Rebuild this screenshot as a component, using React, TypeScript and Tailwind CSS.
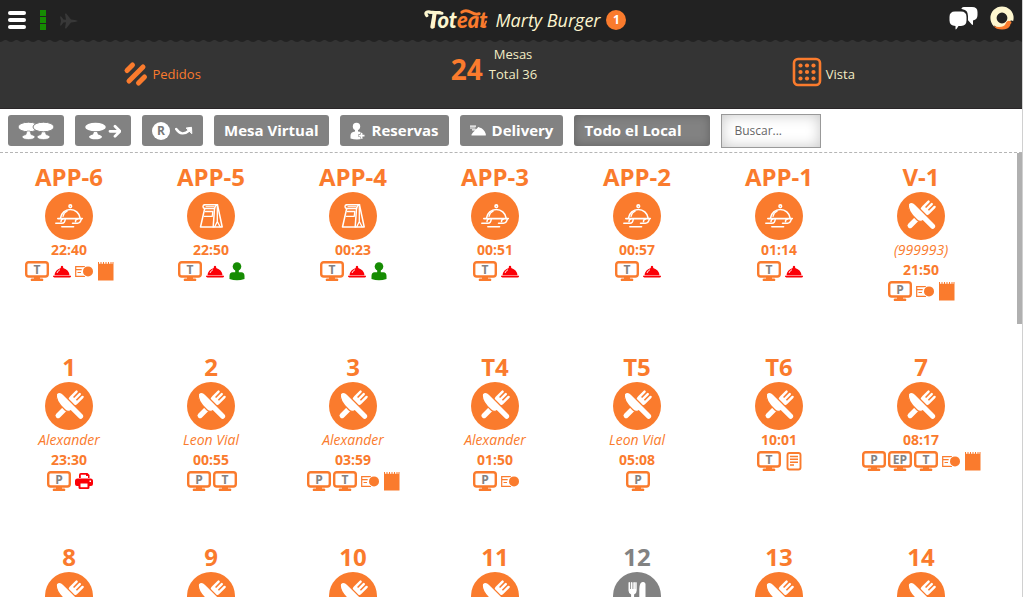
import React, { useState } from 'react';

type Monitor = 'T' | 'P' | 'EP';
type Small = 'bell' | 'card' | 'note' | 'person' | 'printer' | 'bill';
type Kind = 'delivery' | 'bag' | 'table' | 'free';

interface Mesa {
    name: string;
    kind: Kind;
    client?: string;
    time?: string;
    monitors?: Monitor[];
    icons?: Small[];
}

const mesas: Mesa[] = [
    { name: 'APP-6', kind: 'delivery', time: '22:40', monitors: ['T'], icons: ['bell', 'card', 'note'] },
    { name: 'APP-5', kind: 'bag', time: '22:50', monitors: ['T'], icons: ['bell', 'person'] },
    { name: 'APP-4', kind: 'bag', time: '00:23', monitors: ['T'], icons: ['bell', 'person'] },
    { name: 'APP-3', kind: 'delivery', time: '00:51', monitors: ['T'], icons: ['bell'] },
    { name: 'APP-2', kind: 'delivery', time: '00:57', monitors: ['T'], icons: ['bell'] },
    { name: 'APP-1', kind: 'delivery', time: '01:14', monitors: ['T'], icons: ['bell'] },
    { name: 'V-1', kind: 'table', client: '(999993)', time: '21:50', monitors: ['P'], icons: ['card', 'note'] },
    { name: '1', kind: 'table', client: 'Alexander', time: '23:30', monitors: ['P'], icons: ['printer'] },
    { name: '2', kind: 'table', client: 'Leon Vial', time: '00:55', monitors: ['P', 'T'] },
    { name: '3', kind: 'table', client: 'Alexander', time: '03:59', monitors: ['P', 'T'], icons: ['card', 'note'] },
    { name: 'T4', kind: 'table', client: 'Alexander', time: '01:50', monitors: ['P'], icons: ['card'] },
    { name: 'T5', kind: 'table', client: 'Leon Vial', time: '05:08', monitors: ['P'] },
    { name: 'T6', kind: 'table', time: '10:01', monitors: ['T'], icons: ['bill'] },
    { name: '7', kind: 'table', time: '08:17', monitors: ['P', 'EP', 'T'], icons: ['card', 'note'] },
    { name: '8', kind: 'table' },
    { name: '9', kind: 'table' },
    { name: '10', kind: 'table' },
    { name: '11', kind: 'table' },
    { name: '12', kind: 'free' },
    { name: '13', kind: 'table' },
    { name: '14', kind: 'table' },
];

const KindIcon: React.FC<{ kind: Kind }> = ({ kind }) => {
    if (kind === 'delivery') {
        return (
            <svg viewBox="0 0 48 48" className="size-12" fill="none" stroke="#fff" strokeWidth="1.600" strokeLinecap="round" aria-hidden="true">
                <circle cx="25.300" cy="14.200" r="1.300" />
                <path d="M15.500 26a9.900 9.900 0 0 1 19.600 0M12.800 26.600h24.500" />
                <path d="M18 24.300c.5-2.600 2-4.300 4.300-5.300" strokeWidth="1.300" />
                <path d="M10.800 31.200h6.200c2 0 3-1.500 3.200-4M16 29.500c0-1.300.6-2.300 1.800-2.500M27.500 31.200h5c2 0 3.300-1.500 3.800-4M30.500 29.500c0-1.300.8-2.300 2-2.500M16.800 34.700h11.800" strokeWidth="1.500" />
            </svg>
        );
    }
    if (kind === 'bag') {
        return (
            <svg viewBox="0 0 48 48" className="size-12" fill="none" stroke="#fff" strokeWidth="1.500" strokeLinejoin="round" strokeLinecap="round" aria-hidden="true">
                <path d="M17.500 12.800h13l4.700 22.200H13.500l4.200-18.500h9.800" />
                <path d="M17.500 12.800c-2 .4-2 3.300.2 3.700M30.500 12.800c-2 .6-2.700 2-3 3.700l-1.300 18.500" />
                <path d="M18.300 19.500h7.500l-.6 4.800h-8M30.300 14.500v15l-2.500 5.300M30.300 29.500l2.800 5.300" strokeWidth="1.300" />
                <path d="M19 14.700h8" strokeWidth="1" />
            </svg>
        );
    }
    if (kind === 'free') {
        return (
            <svg viewBox="0 0 48 48" className="size-12" fill="#fff" aria-hidden="true">
                <path d="M15.500 10.500q.8-1 1.600 0V17h.8V10.500q.8-1 1.600 0V17h.8V10.500q.8-1 1.600 0V17h.3V10.500q.8-1 1.500 0V18.500q0 3-2.600 4v13.500q-1.500 3-3 0V22.500q-2.600-1-2.600-4z" />
                <path d="M32.500 12v24.500q-1.800 2.500-3.500 0V27h-2.700V17q.3-8 4.200-7 2 .4 2 2z" />
            </svg>
        );
    }
    return (
        <svg viewBox="0 0 48 48" className="size-12" aria-hidden="true">
            <path
                transform="rotate(45 24 24)"
                fill="#fff"
                d="M18 8.500a1.200 1.200 0 0 1 2.400 0v6.200h1.600V8a1.200 1.200 0 0 1 2.400 0v6.700H26V8a1.200 1.200 0 0 1 2.400 0v.5V16c0 2.800-1.200 4.300-2.700 5.200V38.500a2.600 2.600 0 0 1-5.200 0V21.200c-1.500-.9-2.500-2.400-2.500-5.200z"
            />
            <path
                transform="rotate(-45 24 24)"
                fill="#fff"
                stroke="#fa7b2d"
                strokeWidth="1.200"
                d="M23.800 6.500c3 .2 4.400 2.200 4.400 5.500v27.500a3.200 3.200 0 0 1-6.400 0V28.500c-2.300-.6-3.300-2-3.400-4.500-.3-7.500.6-14.500 5.400-17.500z"
            />
        </svg>
    );
};

const SmallIcon: React.FC<{ name: Small }> = ({ name }) => {
    switch (name) {
        case 'bell':
            return (
                <svg viewBox="0 0 20 20" className="size-5" aria-hidden="true">
                    <path fill="#fb0007" d="M1 14.800h18v.7q-.3 1-1.300 1H2.300q-1-.3-1.300-1zM2.500 14.200q.4-5.300 6.300-7.300V6.300Q8.600 4.700 10 4.700t1.200 1.600v.6q5.900 2 6.300 7.300z" />
                    <path d="M5 12q.8-2.300 3-3.300" fill="none" stroke="#fff" strokeWidth=".9" />
                </svg>
            );
        case 'card':
            return (
                <svg viewBox="0 0 20 20" className="size-5" aria-hidden="true">
                    <path d="M11 5.600H1.700v9.800H11M1.700 8.700h6M3.500 11.500h3.500" fill="none" stroke="#fa7b2d" strokeWidth="1.200" />
                    <circle cx="14" cy="10.400" r="5.800" fill="#fff" />
                    <circle cx="14" cy="10.400" r="5" fill="#fa7b2d" />
                </svg>
            );
        case 'note':
            return (
                <svg viewBox="0 0 20 20" className="size-5" fill="#fa7b2d" aria-hidden="true">
                    <path d="M2 1h1v1.800h1.500V1h1v1.800H7V1h1v1.800h1.500V1h1v1.800H12V1h1v1.800h1.500V1h1v1.800H16.500V1H17.500V19.500H2z" />
                </svg>
            );
        case 'person':
            return (
                <svg viewBox="0 0 20 20" className="size-5" fill="#168c03" aria-hidden="true">
                    <circle cx="10" cy="5.500" r="4.300" />
                    <path d="M8.200 9h3.600v2.200h2.500q3.200 0 3.200 3.800v3q-7.500 2.500-15 0v-3q0-3.800 3.200-3.800h2.500z" />
                </svg>
            );
        case 'printer':
            return (
                <svg viewBox="0 0 20 20" className="size-5" aria-hidden="true">
                    <path fill="#fb0007" fillRule="evenodd" d="M5 7V4q0-2 2-2h6.500L15.500 4v3h-1.500V5H12V3.800H6.800V7zM3.500 7.500h13Q19 7.500 19 10v3q0 2-2 2h-1.500v1.500q0 1.500-1.500 1.500H6Q4.500 18 4.500 16.500V15H3Q1 15 1 13v-3Q1 7.500 3.500 7.500zM6.500 12.500v3.800h7v-3.800zM15.500 9.500V11H17V9.500z" />
                </svg>
            );
        default:
            return (
                <svg viewBox="0 0 20 20" className="size-5" fill="none" stroke="#fa7b2d" aria-hidden="true">
                    <rect x="3.500" y="2" width="13" height="16.500" rx="2" strokeWidth="1.900" />
                    <path d="M6 5.500h8M6 8.300h8M6 11.200h8M6 14h4" strokeWidth="1.500" />
                </svg>
            );
    }
};

const MonitorIcon: React.FC<{ label: Monitor }> = ({ label }) => (
    <span className="relative flex w-[26px] justify-center">
        <svg viewBox="0 0 24 22" className="h-[22px] w-6" aria-hidden="true">
            <rect x="1.200" y="2.200" width="21.600" height="14.300" rx="2.500" fill="none" stroke="#fa7b2d" strokeWidth="2.400" />
            <path d="M9 16.500h6v2h2.500q1.500.8.5 2.500H6q-1-1.700.5-2.500H9z" fill="#fa7b2d" />
        </svg>
        <span className="absolute inset-0 text-center text-xs leading-[19px] font-bold text-[#828282]">{label}</span>
    </span>
);

const MesaCard: React.FC<{ mesa: Mesa }> = ({ mesa }) => {
    const free = mesa.kind === 'free';
    return (
        <article className={`flex min-h-[182px] flex-col items-center ${free ? 'text-[#828282]' : 'text-[#fa7b2d]'}`}>
            <h2 className="text-2xl leading-[30px] font-bold">{mesa.name}</h2>
            <div className={`rounded-full ${free ? 'bg-[#828282]' : 'bg-[#fa7b2d]'}`}>
                <KindIcon kind={mesa.kind} />
            </div>
            {mesa.client && <p className="text-sm leading-5 italic">{mesa.client}</p>}
            {mesa.time && <p className="text-sm leading-5 font-bold">{mesa.time}</p>}
            <div className="flex pl-0.5">
                {mesa.monitors?.map((m) => <MonitorIcon key={m} label={m} />)}
                {mesa.icons?.map((i) => (
                    <span key={i} className="flex w-[22px] items-center justify-end">
                        <SmallIcon name={i} />
                    </span>
                ))}
            </div>
        </article>
    );
};

const Logo: React.FC = () => (
    <span className="relative flex pl-1 font-[Lato,sans-serif] text-[22px] leading-8 font-black text-[#fdf6cf]">
        <span className="italic">Tot</span>
        <span className="text-[#fa7b2d] italic">eat</span>
        <svg viewBox="0 0 66 32" className="absolute inset-0 h-full w-full" fill="none" strokeLinecap="round" aria-hidden="true">
            <path d="M3 11.500c-2.500-3 0-4.500 3.500-3.800l12 1.300" stroke="#fdf6cf" strokeWidth="3.200" />
            <path d="M11 9 8.500 23" stroke="#fdf6cf" strokeWidth="4" />
            <path d="M39 8c3-2.500 7-1.500 10 .3s5 2.500 8 1.200" stroke="#fa7b2d" strokeWidth="3" />
            <path d="M59 22.500c2.500.3 4-2 5-5" stroke="#fa7b2d" strokeWidth="2" />
        </svg>
    </span>
);

const barButton = 'flex h-[31px] items-center rounded-[3px] bg-[#828282] px-2.5 text-[15px] font-bold text-white';

export default function App() {
    const [search, setSearch] = useState('');

    return (
        <div className="flex h-screen flex-col overflow-hidden border-r border-[#d0d0d0] bg-white font-['Open_Sans','Noto_Sans',sans-serif]">
            <header className="flex h-10 shrink-0 items-center justify-between bg-[#222] px-2">
                <div className="flex flex-1 items-center">
                    <button type="button" aria-label="Menú" className="flex flex-col gap-[3px]">
                        <span className="h-1 w-[18px] rounded-full bg-white" />
                        <span className="h-1 w-[18px] rounded-full bg-white" />
                        <span className="h-1 w-[18px] rounded-full bg-white" />
                    </button>
                    <div className="ml-3.5 flex flex-col gap-px">
                        <span className="size-1.5 bg-[#168c03]" />
                        <span className="size-1.5 bg-[#168c03]" />
                        <span className="size-1.5 bg-[#168c03]" />
                    </div>
                    <svg viewBox="0 0 18 16" className="mt-0.5 ml-3.5 h-4 w-[18px]" fill="#383838" aria-hidden="true">
                        <path d="M0 3.500h1.200L3.500 6.500l2.500.3L5 1l1-.8 5 6.400 4 .4q2 .4 3 1-1 .6-3 1l-4 .4-5 6.400-1-.8 1-5.800-2.500.3-2.300 3H0L1 8z" />
                    </svg>
                </div>
                <div className="ml-7 flex items-center">
                    <Logo />
                    <h1 className="ml-2 text-lg text-[#fdf6cf] italic">Marty Burger</h1>
                    <span className="ml-1.5 flex size-5 items-center justify-center rounded-full bg-[#fa7b2d] text-xs font-bold text-white">1</span>
                </div>
                <div className="flex flex-1 items-center justify-end gap-3">
                    <button type="button" aria-label="Mensajes" className="-mt-1">
                        <svg viewBox="0 0 29 24" className="h-6 w-[29px]" fill="#fff" aria-hidden="true">
                            <path d="M15 1h8q5.500 0 5.500 5v3q0 4.500-4.500 5.500V18q0 1.500-1.200.5L19 14.300V10q0-6-5.500-6.800Q12 3 12.500 2.300 13.500 1 15 1z" />
                            <path d="M6 5.500h6q5.500 0 5.500 5.500v3.500q0 5-5.500 5.500h-2.500L7.500 23q-1 1-1-.3V20Q.5 19.500.5 14.500V11Q.5 5.500 6 5.500z" />
                        </svg>
                    </button>
                    <button type="button" aria-label="Cuenta" className="-mt-1">
                        <svg viewBox="0 0 24 24" className="size-6" fill="none" aria-hidden="true">
                            <circle cx="12" cy="12" r="8.500" stroke="#fdf6cf" strokeWidth="6.200" />
                            <path d="M4 19.500q4 3.500 9 2 5-1.500 6.300-5.500 1.700-2.500 4-.8V24H4z" fill="#222" />
                            <path d="M3.500 20q3.500 1.300 8 .8 3.500-.5 4.500-4 2-3.500 5-1.200.8 1 .3 1.600-1 .5-1.200 2.300Q18.500 23.500 12 23.500 6 23.500 3.500 20z" fill="#fa7b2d" />
                        </svg>
                    </button>
                </div>
            </header>

            <section className="shrink-0 bg-[#343434]">
                <svg className="block h-[3px] w-full" aria-hidden="true">
                    <defs>
                        <pattern id="scallop" width="11" height="3" patternUnits="userSpaceOnUse">
                            <path d="M0 0v2q2 0 3-1t2.500-1T8 1t3 1V0z" fill="#222" />
                        </pattern>
                    </defs>
                    <rect width="100%" height="3" fill="url(#scallop)" />
                </svg>
                <div className="grid h-[66px] grid-cols-3 border-b border-[#2a2628] pr-[34px] text-[13px] leading-5 text-[#f3edc4]">
                    <a href="#pedidos" className="flex items-center justify-center gap-1 pr-1.5 pb-1 text-[#fa7b2d]">
                        <svg viewBox="0 0 26 26" className="size-[26px]" stroke="#fa7b2d" strokeWidth="5" strokeLinecap="round" aria-hidden="true">
                            <path d="M4 9.500 9.500 4M6 20 20 6M15.500 22l6-6" />
                        </svg>
                        Pedidos
                    </a>
                    <div className="flex justify-center gap-1.5">
                        <strong className="pt-2 text-[28px] leading-9 text-[#fa7b2d]">24</strong>
                        <p className="pt-px text-center">
                            Mesas
                            <br />
                            Total 36
                        </p>
                    </div>
                    <a href="#vista" className="flex items-center justify-center gap-1 pb-1">
                        <svg viewBox="0 0 30 30" className="mb-1 size-[30px]" fill="#fa7b2d" aria-hidden="true">
                            <rect x="2" y="2" width="26" height="26" rx="4" fill="none" stroke="#fa7b2d" strokeWidth="2.600" />
                            {[8.5, 15, 21.5].map((y) => [8.5, 15, 21.5].map((x) => <circle key={`${x}-${y}`} cx={x} cy={y} r="2.100" />))}
                        </svg>
                        Vista
                    </a>
                </div>
            </section>

            <nav className="flex h-11 shrink-0 items-center gap-[11px] border-b border-dashed border-[#b5b5b5] px-2">
                <button type="button" aria-label="Unir mesas" className={barButton}>
                    <svg viewBox="0 0 36 20" className="h-5 w-9" fill="#fff" stroke="#828282" aria-hidden="true">
                        <ellipse cx="10.500" cy="6" rx="10.500" ry="4.800" />
                        <path d="M9 10h3l1 3.500q4 1 4 2.500-1 2.500-6.500 2.500T4 16q0-1.500 4-2.500zM24 10h3l1 3.500q4 1 4 2.500-1 2.500-6.500 2.500T19 16q0-1.500 4-2.500z" strokeWidth=".6" />
                        <ellipse cx="25.500" cy="6" rx="10.500" ry="4.800" />
                    </svg>
                </button>
                <button type="button" aria-label="Mover mesa" className={barButton}>
                    <svg viewBox="0 0 36 20" className="h-5 w-9" fill="#fff" aria-hidden="true">
                        <ellipse cx="10.500" cy="6" rx="10.300" ry="4.300" />
                        <path d="M9 11h3l1 2.500q4 1 4 2.500-1 2.300-6.500 2.300T4 16q0-1.500 4-2.500z" />
                        <path d="M25 10.300h9.500M30 5.300l5 5-5 5" fill="none" stroke="#fff" strokeWidth="2.800" strokeLinejoin="round" strokeLinecap="round" />
                    </svg>
                </button>
                <button type="button" aria-label="Reasignar" className={barButton}>
                    <span className="flex size-[18px] items-center justify-center rounded-full bg-white text-xs font-bold text-[#777]">R</span>
                    <svg viewBox="0 0 18 12" className="ml-[5px] h-3 w-[18px]" fill="none" stroke="#fff" strokeWidth="2.400" strokeLinecap="round" strokeLinejoin="round" aria-hidden="true">
                        <path d="M1.200 4q5.500 8 13 1.500" />
                        <path d="M11.500 3l5-.7.3 6z" fill="#fff" strokeWidth="1" />
                    </svg>
                </button>
                <button type="button" className={barButton}>Mesa Virtual</button>
                <button type="button" className={barButton}>
                    <svg viewBox="0 0 16 18" className="mr-1.5 h-[18px] w-4" fill="#fff" aria-hidden="true">
                        <circle cx="6.500" cy="4.500" r="3.700" />
                        <path d="M5 8h3v1.500q4 0 4.800 3l.2 4q-6 1.800-12.500 0v-3q0-3.500 4.500-4z" />
                        <path d="M11.500 10.500v6M8.500 13.500h6" fill="none" stroke="#828282" strokeWidth="3" />
                        <path d="M11.500 11v5.500M9 13.700h5.500" fill="none" stroke="#fff" strokeWidth="1.800" />
                    </svg>
                    Reservas
                </button>
                <button type="button" className={barButton}>
                    <svg viewBox="0 0 16 14" className="mr-1.5 h-3.5 w-4" fill="#fff" aria-hidden="true">
                        <path d="M1.500 10.500q1.500-2.500 3.500-4h-3V5.300h4L7.500 4Q8 2.500 9.500 3.500q4.500 1 6.300 6.500v1.500H1.500z" />
                        <path d="M0 2.200h6M0 4h5.500" stroke="#fff" strokeWidth="1.200" />
                    </svg>
                    Delivery
                </button>
                <select
                    aria-label="Local"
                    className="h-[31px] w-[136px] appearance-none rounded-[3px] bg-[#828282] px-2.5 text-[15px] font-bold text-white shadow-[inset_0_0_10px_rgba(0,0,0,0.25)]"
                >
                    <option>Todo el Local</option>
                </select>
                <input
                    type="text"
                    aria-label="Buscar"
                    placeholder="Buscar..."
                    value={search}
                    onChange={(e) => setSearch(e.target.value)}
                    className="h-[34px] w-[100px] border border-[#999] px-3 text-xs text-[#555] shadow-[inset_0_0_14px_rgba(0,0,0,0.22)] placeholder:text-[#666]"
                />
            </nav>

            <main className="relative min-h-0 flex-1 overflow-hidden">
                <div className="grid grid-cols-[repeat(auto-fill,minmax(134px,1fr))] gap-2 pt-[9px] pr-[34px] pl-0.5">
                    {mesas.map((mesa) => <MesaCard key={mesa.name} mesa={mesa} />)}
                </div>
                <div className="absolute top-0 right-0 h-[171px] w-[5px] bg-[#b0b0b0]" />
            </main>
        </div>
    );
}
